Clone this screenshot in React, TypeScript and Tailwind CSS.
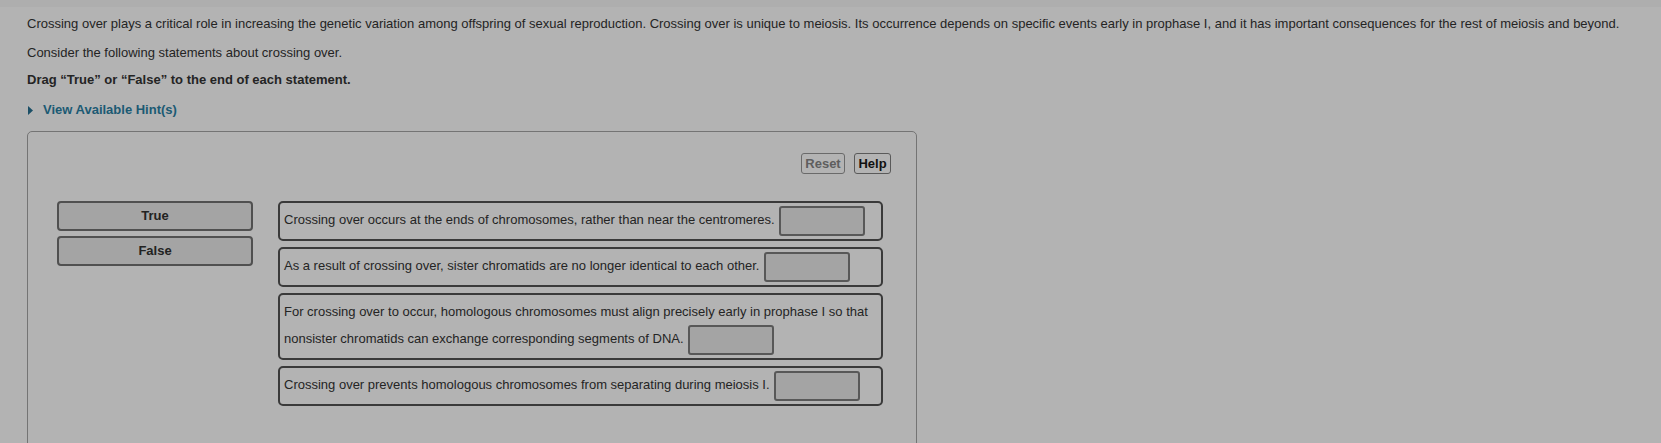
import React from 'react';

const statements = [
  'Crossing over occurs at the ends of chromosomes, rather than near the centromeres.',
  'As a result of crossing over, sister chromatids are no longer identical to each other.',
  'For crossing over to occur, homologous chromosomes must align precisely early in prophase I so that nonsister chromatids can exchange corresponding segments of DNA.',
  'Crossing over prevents homologous chromosomes from separating during meiosis I.',
];

function Label({ text }: { text: string }) {
  return (
    <div className="h-[30px] flex items-center justify-center rounded-[4px] border-2 border-[#505050] bg-[#a4a4a4] text-[13px] font-bold text-[#222]">
      {text}
    </div>
  );
}

function Statement({ text }: { text: string }) {
  return (
    <div className="rounded-[5px] border-2 border-[#3a3a3a] px-[4px] py-[3px] text-[13px] leading-[27px] text-[#242424]">
      {text}{' '}
      <span className="ml-px inline-block h-[30px] w-[86px] align-middle rounded-[3px] border-2 border-[#585858] bg-[#a4a4a4]" />
    </div>
  );
}

export default function App() {
  return (
    <div className="min-h-screen bg-[#b3b3b3] font-['Liberation_Sans',Arial,sans-serif] text-[#242424]">
      {/* top strip */}
      <div className="h-[7px] bg-[#aeaeae]" />

      <div className="px-[27px] pt-[7px]">
        <p className="text-[13px] leading-[20px]">
          Crossing over plays a critical role in increasing the genetic variation among offspring of sexual reproduction. Crossing over is unique to meiosis. Its occurrence depends on specific events early in prophase I, and it has important consequences for the rest of meiosis and beyond.
        </p>
        <p className="mt-[9px] text-[13px] leading-[20px]">Consider the following statements about crossing over.</p>
        <p className="mt-[7px] text-[13px] leading-[20px] font-bold">
          Drag “True” or “False” to the end of each statement.
        </p>

        <div className="mt-[10px] flex items-center gap-[10px] text-[13px] leading-[20px] font-bold text-[#1b5a73]">
          <svg width="5" height="9" viewBox="0 0 5 9" className="ml-px">
            <polygon points="0,0 5,4.5 0,9" fill="#1b4f66" />
          </svg>
          <span>View Available Hint(s)</span>
        </div>

        {/* activity panel */}
        <div className="mt-[11px] w-[890px] rounded-[5px] border border-[#747474] pt-[21px] pb-[60px]">
          <div className="flex justify-end gap-[9px] pr-[25px]">
            <button className="h-[21px] w-[44px] rounded-[3px] border border-[#6a6a6a] text-[13px] font-bold text-[#5e5e5e]">
              Reset
            </button>
            <button className="h-[21px] w-[37px] rounded-[3px] border border-[#5a5a5a] text-[13px] font-bold text-[#111]">
              Help
            </button>
          </div>

          <div className="mt-[27px] flex gap-[25px] pl-[29px]">
            <div className="flex w-[196px] flex-col gap-[5px]">
              <Label text="True" />
              <Label text="False" />
            </div>
            <div className="flex w-[605px] flex-col gap-[6px]">
              {statements.map((s) => (
                <Statement key={s} text={s} />
              ))}
            </div>
          </div>
        </div>
      </div>
    </div>
  );
}
